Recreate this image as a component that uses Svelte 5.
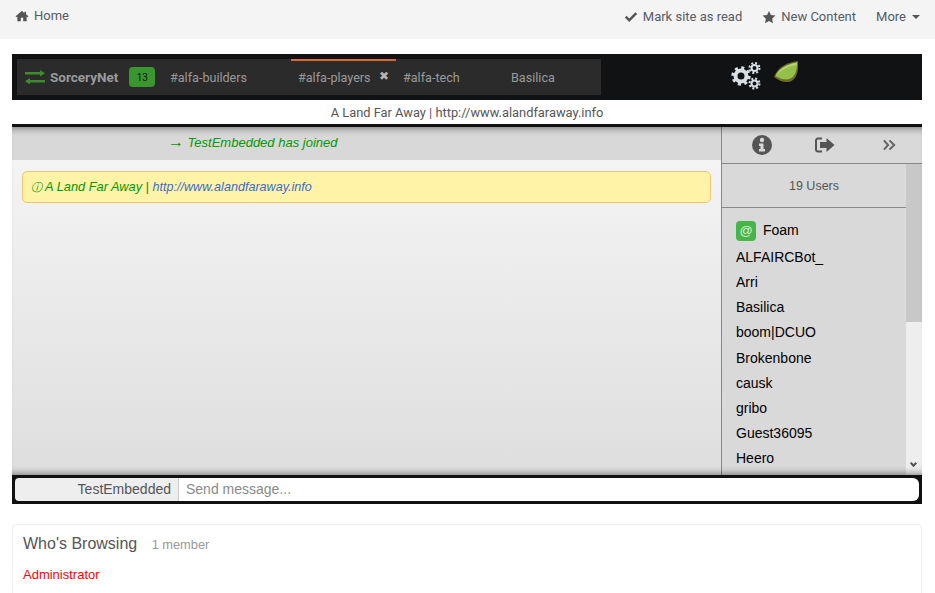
<script>
  const tabs = [
    { name: '#alfa-builders', width: 128 },
    { name: '#alfa-players', width: 105, active: true },
    { name: '#alfa-tech', width: 108 },
    { name: 'Basilica', width: 90 }
  ];
  const users = ['ALFAIRCBot_', 'Arri', 'Basilica', 'boom|DCUO', 'Brokenbone', 'causk', 'gribo', 'Guest36095', 'Heero'];
</script>

<nav class="navbar">
  <a class="nav-link home">
    <svg class="nav-icon" viewBox="0 0 24 24"><path d="M12 3.200 1 12.600l1.300 1.500L4 12.700V21h6v-6h4v6h6v-8.300l1.700 1.400 1.300-1.500-4-3.400V4.500h-3v2.600z"/></svg>
    Home
  </a>
  <div class="nav-right">
    <a class="nav-link">
      <svg class="nav-icon" viewBox="0 0 24 24"><path d="M9 20.500 1.500 13l3-3L9 14.500 19.500 4l3 3z"/></svg>
      Mark site as read
    </a>
    <a class="nav-link">
      <svg class="nav-icon" viewBox="0 0 24 24"><path d="m12 1.500 3.300 7 7.700 1-5.600 5.300 1.400 7.700-6.800-3.700-6.800 3.700 1.400-7.700L1 9.500l7.700-1z"/></svg>
      New Content
    </a>
    <a class="nav-link">More <span class="caret"></span></a>
  </div>
</nav>

<main class="page">
  <section class="chat">
    <header class="chat-head">
      <div class="tabs">
        <div class="network">
          <svg class="swap" viewBox="0 0 20 14.400"><path d="M0 2h15V0l5 3.200-5 3.200V4.500H0zM20 10H5V8l-5 3.200 5 3.200v-2h15z"/></svg>
          <span>SorceryNet</span>
          <span class="count">13</span>
        </div>
        {#each tabs as tab}
          <div class="tab" class:active={tab.active} style="width: {tab.width}px">
            {tab.name}
            {#if tab.active}<span class="close">✖</span>{/if}
          </div>
        {/each}
      </div>
      <div class="tools">
        <svg class="gears" viewBox="0 0 30 28">
          <g fill="none" stroke="#d9e0e5">
            <circle cx="10" cy="14" r="5.500" stroke-width="4"/>
            <circle cx="10" cy="14" r="8.200" stroke-width="3" stroke-dasharray="3 3.440"/>
            <circle cx="23.500" cy="6" r="3" stroke-width="2"/>
            <circle cx="23.500" cy="6" r="5" stroke-width="2" stroke-dasharray="2 1.930"/>
            <circle cx="23.500" cy="21.500" r="3" stroke-width="2"/>
            <circle cx="23.500" cy="21.500" r="5" stroke-width="2" stroke-dasharray="2 1.930"/>
          </g>
        </svg>
        <svg class="leaf" viewBox="0 0 26 22">
          <path d="M25 0C16 1 5 5 1 16c4 3 8 5 13 5 8 0 12-8 11-21z" fill="#6d6a2c"/>
          <path d="M24 1.500C16 3 6 7 2.500 15c4 2.500 7.500 3.500 11 3.500 7-.3 10.800-6.500 10.500-17z" fill="#92c04a"/>
          <path d="M24 1.500C16 3 6 7 2.500 15c5-6 13-10 21.500-11z" fill="#b4d66c"/>
        </svg>
      </div>
    </header>
    <div class="topic">A Land Far Away | http://www.alandfaraway.info</div>

    <div class="chat-body">
      <div class="messages">
        <div class="join"><span class="arrow">→</span> TestEmbedded has joined</div>
        <div class="notice">
          <span class="info">ⓘ</span> A Land Far Away | <a>http://www.alandfaraway.info</a>
        </div>
      </div>
      <aside class="side">
        <div class="side-tools">
          <svg class="info-icon" viewBox="0 0 20 20">
            <circle cx="10" cy="10" r="10" fill="#555"/>
            <circle cx="10" cy="5" r="2.200" fill="#d9d9d9"/>
            <path d="M7 8.500h4.500V14H13v2.500H7V14h1.500v-3H7z" fill="#d9d9d9"/>
          </svg>
          <svg class="exit-icon" viewBox="0 0 20 16">
            <path d="M7 1.500H3A2 2 0 0 0 1 3.500v9a2 2 0 0 0 2 2h4" fill="none" stroke="#555" stroke-width="2"/>
            <path d="M5 5h6.500V1l8 7-8 7v-4H5z" fill="#555"/>
          </svg>
          <svg class="collapse-icon" viewBox="0 0 14 12">
            <path d="M1 1l4.500 5L1 11M7 1l5 5-5 5" fill="none" stroke="#666" stroke-width="2.200"/>
          </svg>
        </div>
        <div class="side-body">
          <div class="user-list">
            <div class="user-count">19 Users</div>
            <ul>
              <li class="op"><span class="at">@</span> Foam</li>
              {#each users as user}
                <li>{user}</li>
              {/each}
            </ul>
          </div>
          <div class="scrollbar">
            <div class="thumb"></div>
            <span class="down"></span>
          </div>
        </div>
      </aside>
      <div class="edge-shadow"></div>
    </div>

    <div class="input-bar">
      <div class="nick">TestEmbedded</div>
      <input class="message" placeholder="Send message..." />
    </div>
  </section>

  <section class="browsing">
    <h3>Who's Browsing <small>1 member</small></h3>
    <a class="admin">Administrator</a>
  </section>
</main>

<style>
  :global(body) {
    margin: 0;
    background: #fff;
    font-family: "Liberation Sans", Arial, sans-serif;
    overflow: hidden;
  }

  .navbar {
    display: flex;
    justify-content: space-between;
    height: 39px;
    padding: 9px 15px 0;
    box-sizing: border-box;
    background: #f4f4f4;
    font-family: Roboto, sans-serif;
    font-size: 13px;
    line-height: 14px;
    color: #555b66;
  }

  .nav-right {
    display: flex;
    gap: 20px;
    margin-top: 1px;
  }

  .nav-link {
    display: flex;
    align-items: center;
    height: 14px;
    gap: 5px;
  }

  .nav-icon {
    width: 14px;
    height: 14px;
    fill: #555;
  }

  .caret {
    width: 0;
    height: 0;
    margin-left: 1px;
    border: 4.500px solid transparent;
    border-top-color: #555;
    border-bottom: 0;
  }

  .page {
    padding: 15px 13px 0 12px;
  }

  .chat-head {
    display: flex;
    height: 46px;
    box-sizing: border-box;
    padding: 5px;
    background: #111214;
  }

  .tabs {
    display: flex;
    width: 584px;
    height: 36px;
    background: #2b2b2b;
    font-family: Roboto, sans-serif;
    font-size: 12.600px;
    color: #9a9a9a;
  }

  .network {
    display: flex;
    align-items: center;
    width: 146px;
    flex: none;
    padding-left: 8px;
    box-sizing: border-box;
    font-size: 13.500px;
    font-weight: 700;
    color: #9a9a9a;
  }

  .swap {
    flex: none;
    width: 20px;
    height: 14.400px;
    margin-right: 5px;
    fill: #3c8c2c;
  }

  .count {
    display: flex;
    align-items: center;
    justify-content: center;
    width: 26px;
    height: 20px;
    margin-left: 11px;
    border-radius: 4px;
    background: #3a962e;
    color: #111;
    font-size: 10px;
    font-weight: 400;
  }

  .tab {
    display: flex;
    align-items: center;
    flex: none;
    gap: 8px;
    box-sizing: border-box;
    padding-left: 7px;
    white-space: nowrap;
  }

  .tab.active {
    height: 36px;
    padding-bottom: 2px;
    border-top: 2px solid #e06a24;
  }

  .close {
    font-size: 12px;
    color: #b5b5b5;
    position: relative;
    top: -1px;
  }

  .tools {
    display: flex;
    align-items: flex-start;
    gap: 12px;
    margin-left: 130px;
    padding-top: 2px;
  }

  .gears {
    width: 30px;
    height: 28px;
    margin-top: 1px;
  }

  .leaf {
    width: 26px;
    height: 22px;
  }

  .topic {
    height: 24px;
    line-height: 26px;
    text-align: center;
    font-size: 12.850px;
    color: #555;
    font-family: Roboto, sans-serif;
  }

  .chat-body {
    position: relative;
    display: flex;
    height: 351px;
    border-top: 3px solid #111;
    box-sizing: border-box;
    background: linear-gradient(#f6f6f6, #dedede);
  }

  .edge-shadow {
    position: absolute;
    inset: 0;
    pointer-events: none;
    box-shadow: inset 0 8px 8px -8px rgba(0, 0, 0, 0.6), inset 0 -8px 8px -8px rgba(0, 0, 0, 0.6);
  }

  .messages {
    flex: 1;
    min-width: 0;
  }

  .join {
    height: 33px;
    line-height: 30px;
    padding-left: 156px;
    background: #d8d8d8;
    font-size: 13px;
    font-style: italic;
    color: #009a00;
  }

  .arrow {
    font-style: normal;
    font-size: 16px;
  }

  .notice {
    height: 32px;
    line-height: 30px;
    margin: 11px 10px 0;
    padding-left: 8px;
    box-sizing: border-box;
    border: 1px solid #f4c56f;
    border-radius: 5px;
    background: #fff3a8;
    font-size: 12.800px;
    font-style: italic;
    color: #009a00;
  }

  .notice a {
    font-size: 12.600px;
    color: #3b6bd0;
  }

  .info {
    font-size: 11px;
  }

  .side {
    display: flex;
    flex-direction: column;
    width: 201px;
    border-left: 1px solid #888;
    box-sizing: border-box;
    background: #d9d9d9;
  }

  .side-tools {
    display: flex;
    align-items: center;
    flex: none;
    height: 37px;
    border-bottom: 1px solid #888;
    box-sizing: border-box;
    padding-left: 30px;
  }

  .info-icon {
    width: 20px;
    height: 20px;
  }

  .exit-icon {
    width: 20px;
    height: 16px;
    margin-left: 43px;
  }

  .collapse-icon {
    width: 13px;
    height: 12px;
    margin-left: 48px;
  }

  .side-body {
    display: flex;
    flex: 1;
    min-height: 0;
  }

  .user-list {
    flex: 1;
    min-width: 0;
    overflow: hidden;
  }

  .user-count {
    height: 43px;
    line-height: 45px;
    border-bottom: 1px solid #888;
    text-align: center;
    font-size: 12.500px;
    color: #555;
  }

  ul {
    margin: 0;
    padding: 9px 14px 0;
    list-style: none;
    font-size: 14px;
    color: #000;
  }

  li {
    height: 25.200px;
    line-height: 25px;
    white-space: nowrap;
  }

  li.op {
    display: flex;
    align-items: center;
    gap: 7px;
    height: 27px;
    margin-bottom: 0.800px;
  }

  .at {
    display: flex;
    align-items: center;
    justify-content: center;
    width: 20px;
    height: 20px;
    border-radius: 4px;
    background: #46b64a;
    color: #d8f2d0;
    font-size: 13px;
  }

  .scrollbar {
    position: relative;
    flex: none;
    width: 16px;
    background: #eee;
  }

  .thumb {
    height: 158px;
    background: #c8c8c8;
  }

  .down {
    position: absolute;
    left: 5px;
    bottom: 9px;
    width: 5px;
    height: 5px;
    transform: rotate(45deg);
    border-right: 2px solid #555;
    border-bottom: 2px solid #555;
    box-sizing: border-box;
  }

  .input-bar {
    display: flex;
    height: 29px;
    box-sizing: border-box;
    padding: 3px;
    background: #111;
  }

  .nick {
    width: 164px;
    flex: none;
    box-sizing: border-box;
    padding-right: 7px;
    line-height: 23px;
    text-align: right;
    font-size: 14px;
    color: #555;
    background: #eee;
    border-right: 1px solid #ccc;
    border-radius: 4px 0 0 4px;
  }

  .message {
    flex: 1;
    min-width: 0;
    padding: 0 7px 1px;
    border: 0;
    border-radius: 0 6px 6px 0;
    outline: none;
    font-family: inherit;
    font-size: 14px;
    background: #fff;
  }

  .message::placeholder {
    color: #8a8a8a;
    opacity: 1;
  }

  .browsing {
    height: 80px;
    margin-top: 20px;
    padding: 10px;
    box-sizing: border-box;
    border: 1px solid #eee;
    border-radius: 4px;
  }

  h3 {
    margin: 0;
    font-size: 16px;
    line-height: 18px;
    font-weight: 400;
    color: #555;
  }

  small {
    margin-left: 10px;
    font-size: 12.800px;
    color: #999;
  }

  .admin {
    display: block;
    margin-top: 13px;
    font-size: 13px;
    color: #f00;
  }
</style>
